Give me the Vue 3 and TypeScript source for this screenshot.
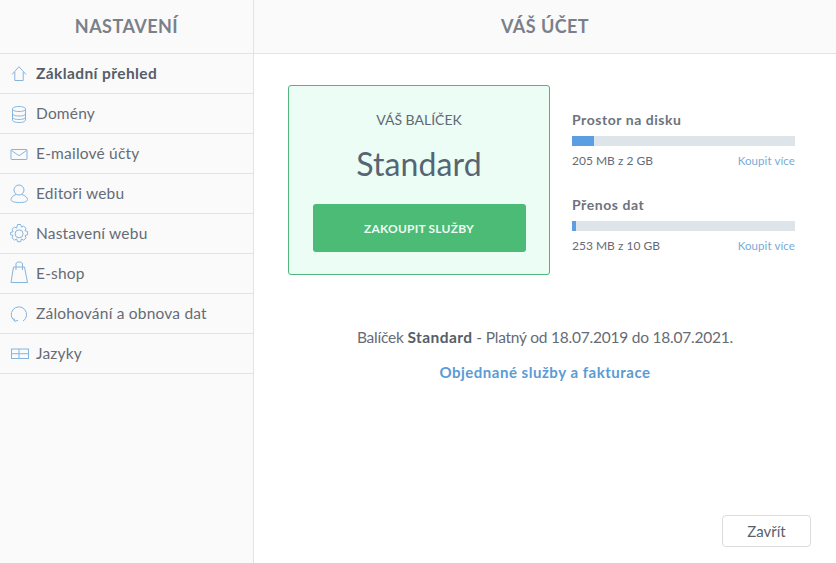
<script setup lang="ts">
const items = ['Základní přehled','Domény','E-mailové účty','Editoři webu','Nastavení webu','E-shop','Zálohování a obnova dat','Jazyky'];
</script>

<template>
  <div class="app">
    <aside class="side">
      <div class="head side-head">NASTAVENÍ</div>
      <nav>
        <div v-for="(item, i) in items" :key="item" class="row" :class="{ active: i === 0 }">
          <svg class="ico" width="20" height="20" viewBox="0 0 20 20" fill="none" stroke="#85b5de" stroke-width="1">
            <template v-if="i === 0"><path d="M3 10.500 10 2.700l7 7.800M5.800 8v8.500h8.400V8" /></template>
            <template v-else-if="i === 1"><path d="M3.500 5c0-1.500 2.500-2.500 6.500-2.500s6.500 1 6.500 2.500v11c0 1.500-2.500 2.500-6.500 2.500s-6.500-1-6.500-2.500z" /><path d="M3.500 5c0 1.500 2.500 2.500 6.500 2.500s6.500-1 6.500-2.500M3.500 9.500c0 1.500 2.500 2.500 6.500 2.500s6.500-1 6.500-2.500M3.500 13c0 1.500 2.500 2.500 6.500 2.500s6.500-1 6.500-2.500" /></template>
            <template v-else-if="i === 2"><rect x="2" y="5.500" width="16" height="10" rx=".5" /><path d="m2.500 6.500 7.500 5.200 7.500-5.200" /></template>
            <template v-else-if="i === 3"><circle cx="10" cy="6" r="5" /><path d="M7 10.500C4 11.500 2 13.500 2 15.500c0 2 3 3 8.500 3s8-1 8-3c0-2-2.500-4-5.500-5" /></template>
            <template v-else-if="i === 4"><path d="M8.500 .5h3.200l.7 2.600 2.300-1 2.400 2.300-1.100 2.300 2.600.8v3.200l-2.600.8 1.100 2.300-2.400 2.300-2.300-1.100-.7 2.700H8.500l-.8-2.700-2.300 1.100-2.400-2.300 1.100-2.300-2.600-.8V8.500l2.600-.8-1.100-2.300 2.400-2.300 2.300 1z" /><circle cx="10.100" cy="9.800" r="4" /></template>
            <template v-else-if="i === 5"><path d="M4.500 3h11l3 15.500H2z" /><path d="M7 6V0c0-1.500 1.200-2 3.200-2s3.300.5 3.300 2v6" /></template>
            <template v-else-if="i === 6"><path d="M14 17.100A7.700 7.700 0 1 0 6 17.200" /><path d="M4.700 14.200 6 17.300l3-1" /></template>
            <template v-else><rect x="2.500" y="5" width="17" height="9.500" /><path d="M2.500 9.700h17M10 5v9.500" /></template>
          </svg>
          <span>{{ item }}</span>
        </div>
      </nav>
    </aside>
    <main class="main">
      <div class="head">VÁŠ ÚČET</div>
      <div class="body">
        <div class="top">
          <section class="card">
            <div class="eyebrow">VÁŠ BALÍČEK</div>
            <div class="plan">Standard</div>
            <button class="buy">ZAKOUPIT SLUŽBY</button>
          </section>
          <section class="usage">
            <div class="meter">
              <div class="m-title">Prostor na disku</div>
              <div class="bar"><div class="fill" style="width: 22px"></div></div>
              <div class="m-foot"><span>205 MB z 2 GB</span><a>Koupit více</a></div>
            </div>
            <div class="meter">
              <div class="m-title">Přenos dat</div>
              <div class="bar"><div class="fill" style="width: 4px"></div></div>
              <div class="m-foot"><span>253 MB z 10 GB</span><a>Koupit více</a></div>
            </div>
          </section>
        </div>
        <p class="info">Balíček <b>Standard</b> - Platný od 18.07.2019 do 18.07.2021.</p>
        <a class="orders">Objednané služby a fakturace</a>
        <div class="foot"><button class="close">Zavřít</button></div>
      </div>
    </main>
  </div>
</template>

<style>
html, body { margin: 0; background: #fff; }
</style>

<style scoped>
.app { display: flex; width: 836px; height: 563px; overflow: hidden; font-family: Lato, "Open Sans", sans-serif; color: #5a5f69; }
.side { width: 253px; flex: none; background: #fafafa; border-right: 1px solid #e3e3e3; }
.main { flex: 1; min-width: 0; display: flex; flex-direction: column; }
.head { flex: none; border-bottom: 1px solid #e3e3e3; background: #fafafa; display: flex; align-items: center; justify-content: center; padding-bottom: 2px; height: 51px; font-size: 18px; font-weight: 700; color: #7a8089; letter-spacing: .45px; }
.row { height: 37px; padding-bottom: 2px; border-bottom: 1px solid #e3e3e3; display: flex; align-items: center; padding-left: 9px; gap: 7px; font-size: 15.500px; letter-spacing: .2px; color: #666b75; }
.row.active { font-weight: 700; color: #565d69; letter-spacing: .4px; }
.ico { flex: none; overflow: visible; margin-top: 2px; }
.body { flex: 1; display: flex; flex-direction: column; align-items: center; padding: 31px 25px 16px; min-height: 0; }
.top { display: flex; align-self: stretch; gap: 22px; margin-left: 9px; }
.card { width: 262px; height: 190px; box-sizing: border-box; border: 1px solid #4fb67c; border-radius: 3px; background: #ebfdf4; display: flex; flex-direction: column; align-items: center; padding: 26px 24px 0; }
.eyebrow { font-size: 14px; line-height: 17px; color: #5f6874; margin-top: -1px; }
.plan { font-size: 32px; line-height: 40px; margin-top: 16px; color: #566573; letter-spacing: .1px; }
.buy { margin-top: 20px; width: 213px; height: 48px; border: 0; border-radius: 3px; background: #4bbb76; color: #eefaf2; font: 700 12px Lato, sans-serif; letter-spacing: .2px; }
.usage { width: 223px; padding-top: 26px; }
.meter { height: 85px; }
.m-title { font-size: 14px; line-height: 17px; font-weight: 700; color: #6d737d; letter-spacing: .55px; }
.bar { height: 10px; margin-top: 8px; background: #dde4ea; }
.fill { height: 100%; background: #5b9fe2; }
.m-foot { display: flex; justify-content: space-between; margin-top: 7px; font-size: 12px; line-height: 15px; color: #666b75; }
.m-foot a { color: #78abd9; font-size: 11.500px; letter-spacing: .1px; }
.info { margin: 47px 0 0; font-size: 15.500px; line-height: 19px; color: #666b75; letter-spacing: -.22px; }
.info b { color: #565d69; letter-spacing: .45px; }
.orders { margin-top: 16px; font-size: 15px; line-height: 19px; font-weight: 700; color: #5b9bd5; letter-spacing: .52px; }
.foot { margin-top: auto; align-self: stretch; display: flex; justify-content: flex-end; }
.close { width: 89px; height: 32px; background: #fff; border: 1px solid #dcdcdc; border-radius: 4px; font: 15px Lato, sans-serif; color: #5a5f69; }
</style>
